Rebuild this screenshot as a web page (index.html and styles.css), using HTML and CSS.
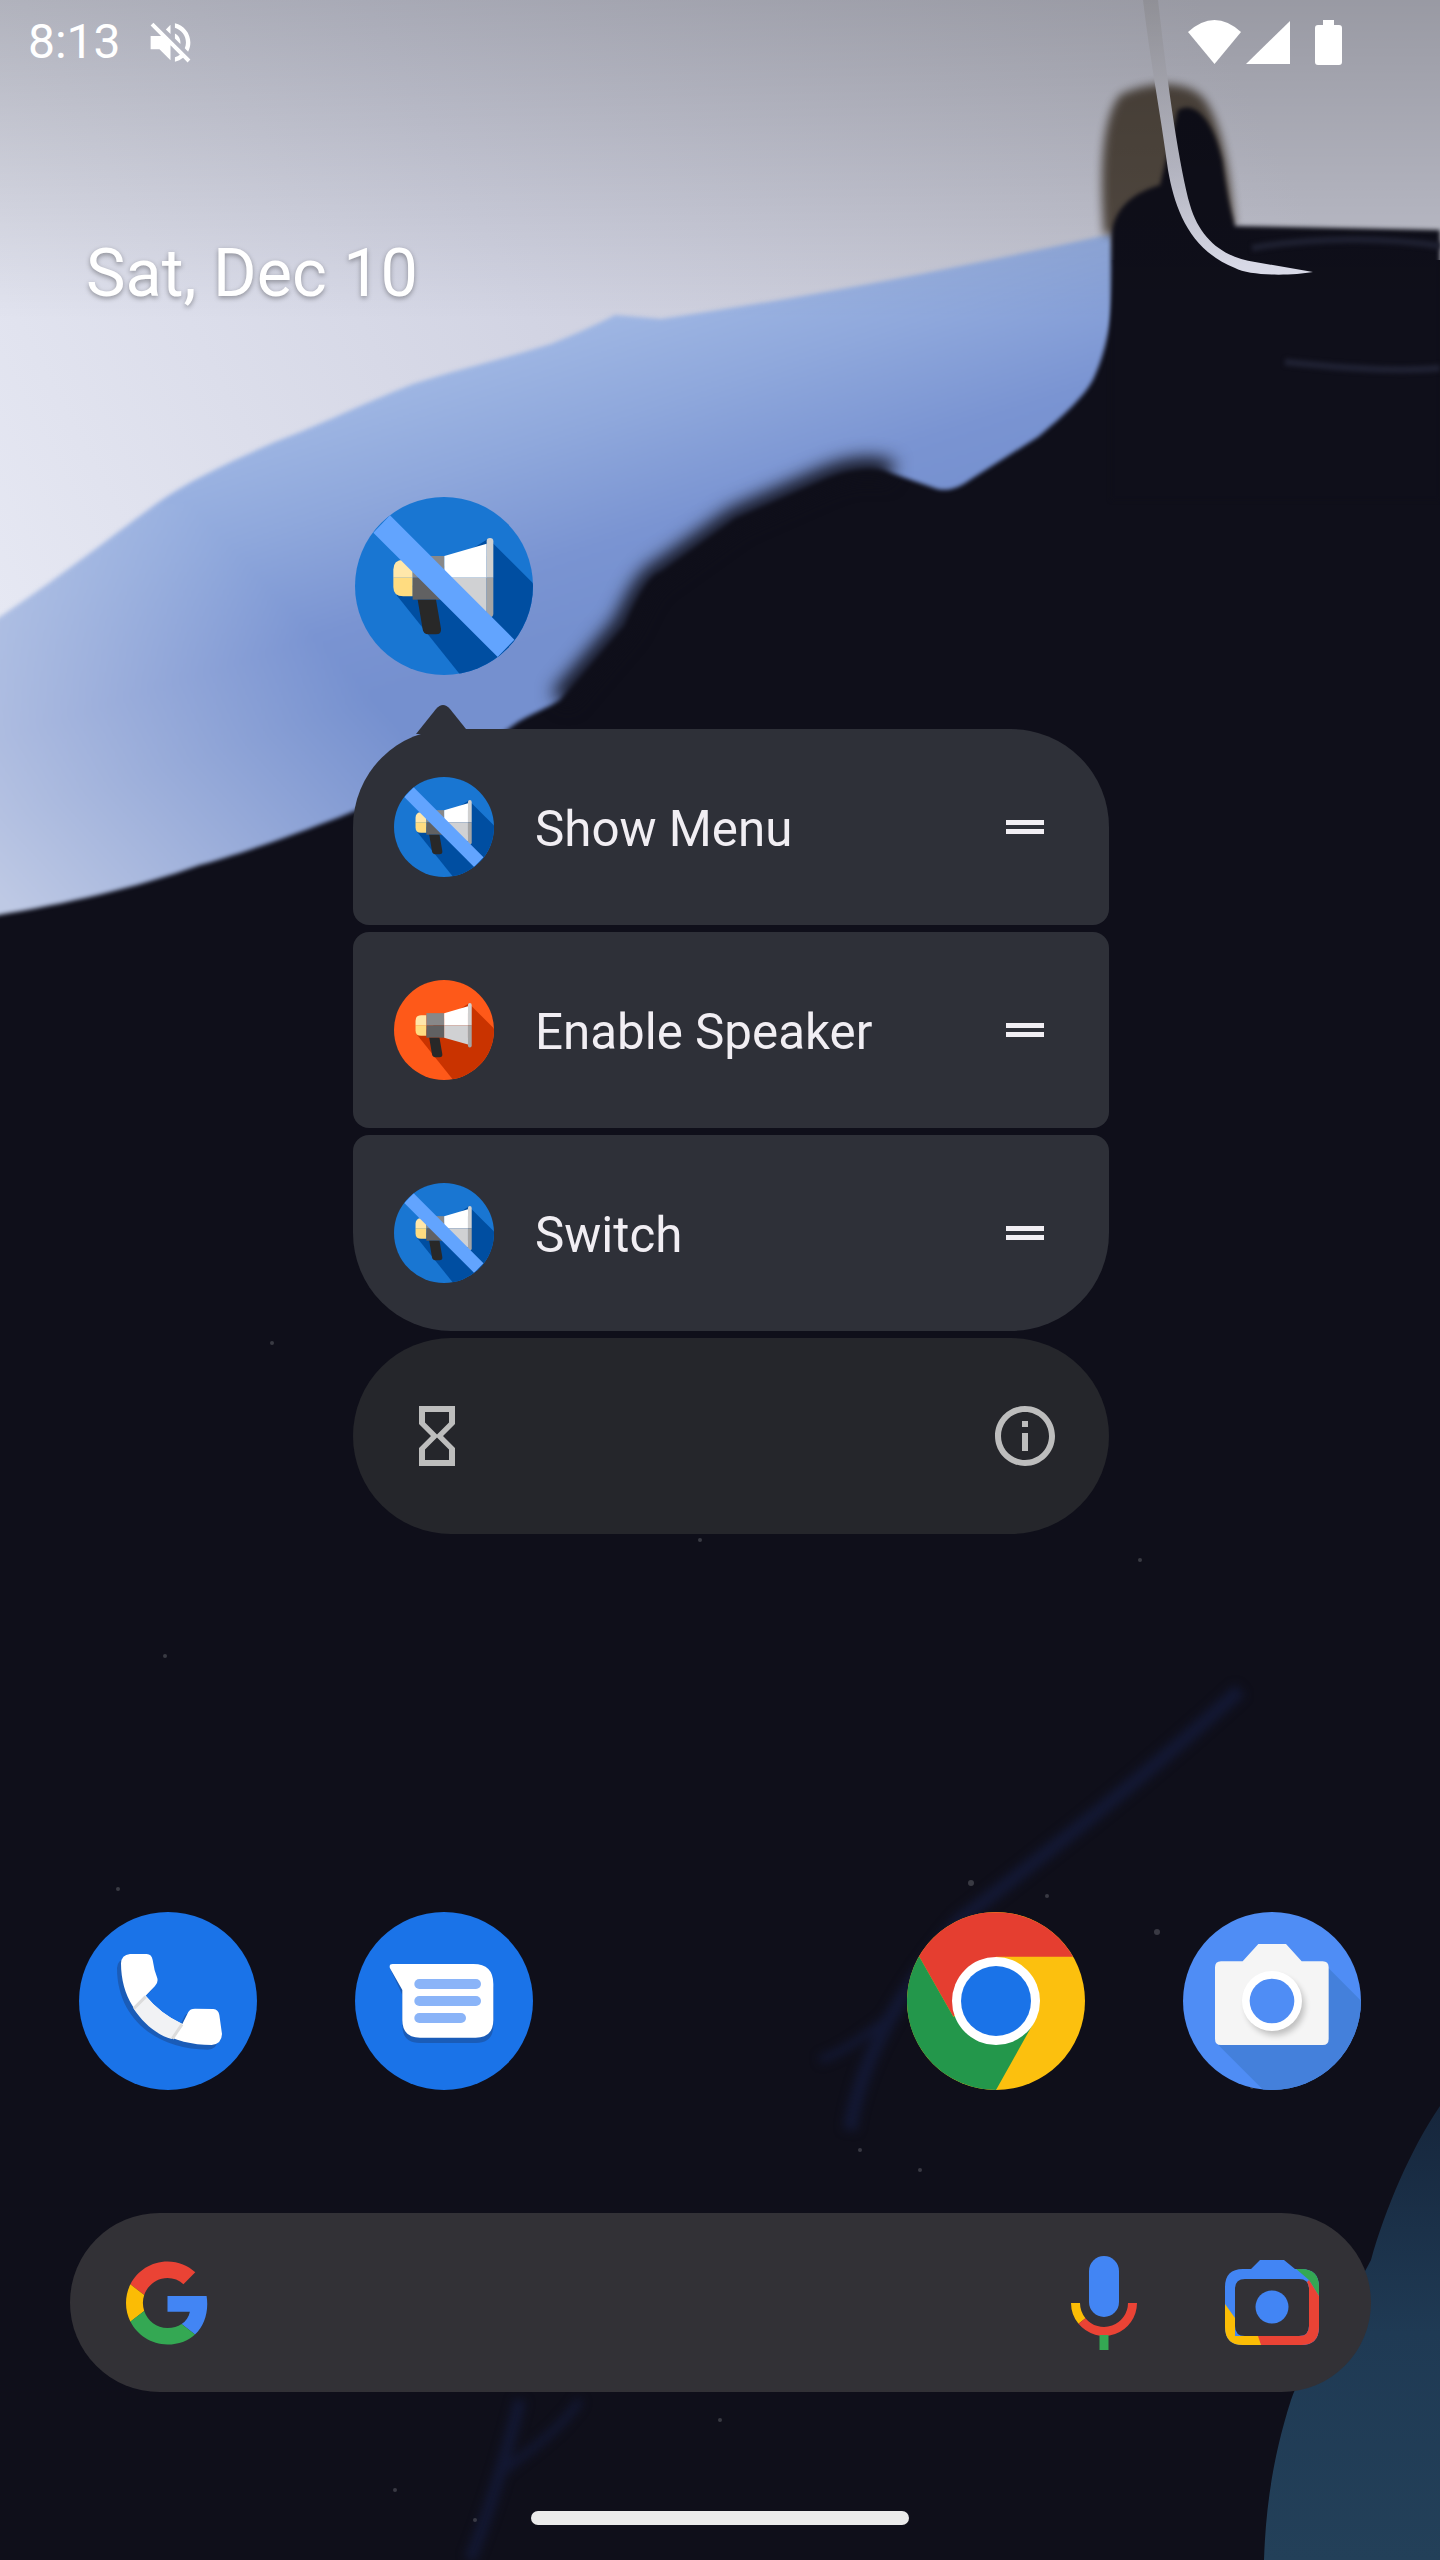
FILE: index.html
```html
<!DOCTYPE html>
<html lang="en">
<head>
    <meta charset="UTF-8">
    <title>Home screen</title>
    <link rel="stylesheet" href="styles.css">
</head>
<body>
<div class="screen">
    <svg class="wallpaper" viewBox="0 0 1440 2560" aria-hidden="true">
        <defs>
            <linearGradient id="wallLight" gradientUnits="userSpaceOnUse" x1="1200" y1="0" x2="0" y2="620">
                <stop offset="0" stop-color="#bfc0cc"/>
                <stop offset="0.55" stop-color="#d2d4e3"/>
                <stop offset="1" stop-color="#e6e8f3"/>
            </linearGradient>
            <linearGradient id="wallBlue" gradientUnits="userSpaceOnUse" x1="500" y1="250" x2="620" y2="620">
                <stop offset="0" stop-color="#aec4ea"/>
                <stop offset="0.5" stop-color="#8fa8dc"/>
                <stop offset="0.8" stop-color="#7a94d2"/>
                <stop offset="1" stop-color="#7590cf"/>
            </linearGradient>
            <linearGradient id="wallFade" gradientUnits="userSpaceOnUse" x1="0" y1="900" x2="300" y2="620">
                <stop offset="0" stop-color="#e6e8f0" stop-opacity="0.65"/>
                <stop offset="1" stop-color="#e6e8f0" stop-opacity="0"/>
            </linearGradient>
            <linearGradient id="wallScrim" x1="0" y1="0" x2="0" y2="1">
                <stop offset="0" stop-color="#000" stop-opacity="0.2"/>
                <stop offset="1" stop-color="#000" stop-opacity="0"/>
            </linearGradient>
            <linearGradient id="wallTeal" x1="0" y1="0" x2="0" y2="1">
                <stop offset="0" stop-color="#16263c"/>
                <stop offset="0.5" stop-color="#1f3a54"/>
                <stop offset="1" stop-color="#234059"/>
            </linearGradient>
            <linearGradient id="wallStreak" gradientUnits="userSpaceOnUse" x1="1150" y1="0" x2="1220" y2="270">
                <stop offset="0" stop-color="#b4b4bc"/>
                <stop offset="0.6" stop-color="#c4c5d2"/>
                <stop offset="1" stop-color="#dfe0ee"/>
            </linearGradient>
            <filter id="soft2" color-interpolation-filters="sRGB"><feGaussianBlur stdDeviation="2"/></filter>
            <filter id="soft5" color-interpolation-filters="sRGB" x="-30%" y="-30%" width="160%" height="160%"><feGaussianBlur stdDeviation="5"/></filter>
            <filter id="soft9" color-interpolation-filters="sRGB" x="-30%" y="-30%" width="160%" height="160%"><feGaussianBlur stdDeviation="9"/></filter>
        </defs>
        <rect width="1440" height="2560" fill="#0f0f1a"/>
        <path d="M0,0H1440V260L1111,260L0,640Z" fill="url(#wallLight)"/>
        <g filter="url(#soft2)">
            <path fill="url(#wallBlue)" d="M1111,234 C950,270 790,300 661,319 L615,315 C590,328 570,336 551,344 C500,360 455,370 413,384 C360,405 320,425 275,442 C230,462 190,480 156,504 C100,545 50,585 -20,630 L-20,918 C60,905 130,890 200,865 C260,848 300,832 340,817 C380,800 410,790 430,778 C470,755 500,735 518,722 C535,712 548,708 560,700 L624,625 C640,590 650,575 661,571 L735,518 L826,478 C850,468 875,465 891,473 L937,489 C950,492 960,487 973,478 L1038,437 C1065,415 1085,395 1093,380 C1110,345 1114,300 1116,268 Z"/>
            <path fill="url(#wallFade)" d="M156,504 C100,545 50,585 -20,630 L-20,918 C60,905 130,890 200,865 C260,848 300,832 340,817 L400,790 L400,504Z"/>
        </g>
        <path filter="url(#soft9)" fill="none" stroke="#0f0f1a" stroke-width="22" d="M560,700 L624,625 C640,590 650,575 661,571 L735,518 L826,478 C850,468 875,465 891,473"/>
        <path filter="url(#soft5)" fill="#3f3428" opacity="0.85" d="M1104,235 C1100,180 1100,120 1120,95 C1150,80 1190,80 1205,100 C1225,130 1230,180 1235,226Z"/>
        <path filter="url(#soft2)" fill="#0f0f1a" d="M1111,240 C1112,215 1125,195 1160,185 L1178,110 C1195,100 1213,120 1222,160 C1226,190 1230,210 1235,226 L1440,230 V500 H1111Z"/>
        <path fill="url(#wallStreak)" d="M1143,0 L1158,0 C1168,90 1180,170 1190,205 C1200,240 1225,258 1255,262 L1313,272 C1290,276 1250,276 1235,268 C1190,250 1175,210 1168,170 C1160,110 1150,60 1143,0Z"/>
        <path d="M1252,248 C1320,236 1390,238 1440,246 M1285,362 C1340,368 1400,372 1440,368" fill="none" stroke="#1f2132" stroke-width="7" filter="url(#soft2)"/>
        <rect width="1440" height="320" fill="url(#wallScrim)"/>
        <path d="M1440,2106 C1410,2150 1385,2210 1371,2260 C1340,2320 1305,2360 1291,2400 C1275,2450 1266,2500 1264,2560 H1440Z" fill="url(#wallTeal)"/>
        <g fill="none" stroke="#131833" filter="url(#soft5)">
            <path stroke-width="14" d="M1240,1690 C1130,1790 1050,1850 960,1920 C900,1990 860,2060 850,2130"/>
            <path stroke-width="12" d="M520,2400 C505,2460 490,2510 470,2560"/>
            <path stroke-width="8" d="M580,2400 C560,2430 530,2450 505,2470"/>
            <path stroke-width="8" d="M900,2010 C870,2030 850,2050 820,2060"/>
        </g>
        <g fill="#55565f" opacity="0.6">
            <circle cx="118" cy="1889" r="2"/><circle cx="165" cy="1656" r="2"/><circle cx="272" cy="1343" r="2"/>
            <circle cx="971" cy="1883" r="3"/><circle cx="1157" cy="1932" r="3"/><circle cx="1047" cy="1896" r="2"/>
            <circle cx="700" cy="1540" r="2"/><circle cx="1252" cy="2087" r="2"/><circle cx="1335" cy="1990" r="2"/>
            <circle cx="920" cy="2170" r="2"/><circle cx="395" cy="2490" r="2"/><circle cx="860" cy="2150" r="2"/>
            <circle cx="475" cy="2520" r="2"/><circle cx="720" cy="2420" r="2"/><circle cx="1140" cy="1560" r="2"/>
        </g>
    </svg>

    <svg class="defs" aria-hidden="true">
        <defs>
            <clipPath id="megaClip"><circle cx="312" cy="317" r="267"/></clipPath>
            <g id="mega">
                <circle class="mega-disc" cx="312" cy="317" r="267"/>
                <polygon class="mega-shade" clip-path="url(#megaClip)" points="445,175 640,370 640,620 390,620 170,345"/>
                <path d="M218,238H190Q160,238 160,268V292H218Z" fill="#ffe7aa"/>
                <path d="M218,292H160V320Q160,348 190,348H218Z" fill="#ffdc80"/>
                <rect x="218" y="227" width="95" height="65" fill="#888889"/>
                <rect x="218" y="292" width="95" height="66" fill="#616162"/>
                <polygon points="313,227 440,190 440,292 313,292" fill="#fff"/>
                <polygon points="313,292 440,292 440,395 313,358" fill="#d0d1d3"/>
                <path d="M440,292V183Q440,173 450,173T460,183V292Z" fill="#d0d0d0"/>
                <path d="M440,292H460V400Q460,410 450,410T440,400Z" fill="#a5a5a5"/>
                <path d="M233,358H288L303,445Q305,462 288,462H265Q250,462 248,447Z" fill="#282828"/>
            </g>
            <polygon id="megaSlash" clip-path="url(#megaClip)" fill="#62a4fe" points="150,105 100,157 473,530 523,478"/>
        </defs>
    </svg>

    <header class="status">
        <span class="status-time">8:13</span>
        <svg class="status-mute" viewBox="0 0 24 24" fill="#fff"><path d="M16.5 12c0-1.77-1.02-3.29-2.5-4.03v2.21l2.45 2.45c.03-.2.05-.41.05-.63zm2.5 0c0 .94-.2 1.82-.54 2.64l1.51 1.51C20.63 14.91 21 13.5 21 12c0-4.28-2.99-7.86-7-8.77v2.06c2.89.86 5 3.54 5 6.71zM4.27 3L3 4.27 7.73 9H3v6h4l5 5v-6.73l4.25 4.25c-.67.52-1.42.93-2.25 1.18v2.06c1.38-.31 2.63-.95 3.69-1.81L19.73 21 21 19.73l-9-9L4.27 3zM12 4L9.91 6.09 12 8.18V4z"/></svg>
        <div class="status-right">
            <svg class="status-wifi" viewBox="0 0 53 44" fill="#fff"><path d="M0,12 Q26.5,-12 53,12 L26.5,44Z"/></svg>
            <svg class="status-signal" viewBox="0 0 44 43" fill="#fff"><path d="M0,43 L44,0 V43Z"/></svg>
            <svg class="status-battery" viewBox="0 0 27 45" fill="#fff"><path d="M8,0H19V5H24Q27,5 27,8V42Q27,45 24,45H3Q0,45 0,42V8Q0,5 3,5H8Z"/></svg>
        </div>
    </header>

    <div class="date">Sat, Dec 10</div>

    <svg class="app-shortcut mega-blue" viewBox="45 50 534 534"><use href="#mega"/><use href="#megaSlash"/></svg>

    <section class="popup">
        <svg class="popup-arrow" viewBox="0 0 54 30"><path d="M0,30 L20,5 Q27,-3 34,5 L54,30Z"/></svg>
        <div class="popup-item popup-first">
            <svg class="popup-icon mega-blue" viewBox="45 50 534 534"><use href="#mega"/><use href="#megaSlash"/></svg>
            <span class="popup-label">Show Menu</span>
            <span class="popup-handle"></span>
        </div>
        <div class="popup-item">
            <svg class="popup-icon mega-orange" viewBox="45 50 534 534"><use href="#mega"/></svg>
            <span class="popup-label">Enable Speaker</span>
            <span class="popup-handle"></span>
        </div>
        <div class="popup-item popup-last">
            <svg class="popup-icon mega-blue" viewBox="45 50 534 534"><use href="#mega"/><use href="#megaSlash"/></svg>
            <span class="popup-label">Switch</span>
            <span class="popup-handle"></span>
        </div>
        <div class="popup-footer">
            <svg class="footer-icon" viewBox="0 0 24 24"><path d="M6 2v6h.01L6 8.01 10 12l-4 4 .01.01H6V22h12v-5.99h-.01L18 16l-4-4 4-3.99-.01-.01H18V2H6zm10 14.5V20H8v-3.5l4-4 4 4zm-4-5l-4-4V4h8v3.5l-4 4z"/></svg>
            <svg class="footer-icon" viewBox="0 0 24 24"><path d="M11 7h2v2h-2zm0 4h2v6h-2zm1-9C6.48 2 2 6.48 2 12s4.48 10 10 10 10-4.48 10-10S17.52 2 12 2zm0 18c-4.41 0-8-3.59-8-8s3.59-8 8-8 8 3.59 8 8-3.59 8-8 8z"/></svg>
        </div>
    </section>

    <nav class="dock">
        <svg class="dock-icon" viewBox="87 96 534 534">
            <circle cx="354" cy="363" r="267" fill="#1a73e8"/>
            <path fill="#1a5cb8" transform="translate(-12 14)" d="M240,222 L290,222 Q305,222 308,240 Q312,270 322,295 Q325,308 315,318 L287,347 Q330,400 397,432 L415,396 Q420,386 435,386 L490,387 Q505,388 508,405 L516,462 Q515,492 485,495 C330,495 213,400 213,250 Q214,225 240,222Z"/>
            <path fill="#fff" d="M240,222 L290,222 Q305,222 308,240 Q312,270 322,295 Q325,308 315,318 L287,347 Q330,400 397,432 L415,396 Q420,386 435,386 L490,387 Q505,388 508,405 L516,462 Q515,492 485,495 C330,495 213,400 213,250 Q214,225 240,222Z"/>
            <path fill="#f1f2f4" d="M287,347 Q330,400 397,432 L365,477 C320,465 280,430 250,385Z"/>
            <path stroke="#dcdcdc" stroke-width="9" d="M287,350 L252,385 M396,433 L367,476"/>
        </svg>
        <svg class="dock-icon" viewBox="915 96 534 534">
            <circle cx="1182" cy="363" r="267" fill="#1a73e8"/>
            <path fill="#1a5cb8" d="M1020,265 L1057,345 V436 Q1057,489 1110,489 H1277 Q1330,489 1330,436 V320 L1100,265Z"/>
            <path fill="#fff" d="M1028,252 H1270 Q1330,252 1330,312 V420 Q1330,473 1277,473 H1110 Q1057,473 1057,420 V330 L1020,265 Q1016,252 1028,252Z"/>
            <g fill="#8ab4f8">
                <rect x="1093" y="297" width="200" height="30" rx="15"/>
                <rect x="1093" y="348" width="200" height="30" rx="15"/>
                <rect x="1093" y="399" width="155" height="30" rx="15"/>
            </g>
        </svg>
        <svg class="dock-icon dock-chrome" viewBox="51 96 534 534">
            <circle cx="318" cy="363" r="267" fill="#fcc00e"/>
            <path fill="#e53e30" d="M549,230 A267,267 0 0 0 87,229 L190,410 L318,230Z"/>
            <path fill="#23974b" d="M87,229 A267,267 0 0 0 318,630 L430,430 L318,362 L190,410Z"/>
            <circle cx="318" cy="363" r="132" fill="#fff"/>
            <circle cx="318" cy="363" r="105" fill="#1a73e8"/>
        </svg>
        <svg class="dock-icon" viewBox="879 96 534 534">
            <defs>
                <clipPath id="cameraClip"><circle cx="1146" cy="363" r="267"/></clipPath>
                <filter id="lensShadow" color-interpolation-filters="sRGB"><feGaussianBlur stdDeviation="9"/></filter>
            </defs>
            <circle cx="1146" cy="363" r="267" fill="#4f8df5"/>
            <polygon clip-path="url(#cameraClip)" fill="#4480db" points="1316,265 1440,389 1440,660 1150,660 985,495"/>
            <path fill="#f5f5f5" d="M993,244 H1058 L1105,192 H1188 L1235,244 H1298 Q1316,244 1316,262 V477 Q1316,495 1298,495 H993 Q975,495 975,477 V262 Q975,244 993,244Z"/>
            <circle cx="1156" cy="378" r="88" fill="#000" opacity="0.22" filter="url(#lensShadow)"/>
            <circle cx="1146" cy="363" r="90" fill="#fff"/>
            <circle cx="1146" cy="363" r="67" fill="#4f8df5"/>
        </svg>
    </nav>

    <div class="search">
        <svg class="search-g" viewBox="0 0 48 48">
            <path fill="#ea4335" d="M24 9.5c3.54 0 6.71 1.22 9.21 3.6l6.85-6.85C35.9 2.38 30.47 0 24 0 14.62 0 6.51 5.38 2.56 13.22l7.98 6.19C12.43 13.72 17.74 9.5 24 9.5z"/>
            <path fill="#4285f4" d="M46.98 24.55c0-1.57-.15-3.09-.38-4.55H24v9.02h12.94c-.58 2.96-2.26 5.48-4.78 7.18l7.73 6c4.51-4.18 7.09-10.36 7.09-17.65z"/>
            <path fill="#fbbc05" d="M10.53 28.59c-.48-1.45-.76-2.99-.76-4.59s.27-3.14.76-4.59l-7.98-6.19C.92 16.46 0 20.12 0 24c0 3.88.92 7.54 2.56 10.78l7.97-6.19z"/>
            <path fill="#34a853" d="M24 48c6.48 0 11.93-2.13 15.89-5.81l-7.73-6c-2.15 1.45-4.92 2.3-8.16 2.3-6.26 0-11.57-4.22-13.47-9.91l-7.98 6.19C6.51 42.62 14.62 48 24 48z"/>
        </svg>
        <svg class="search-mic" viewBox="0 0 66 94">
            <rect x="18" y="0" width="30" height="61" rx="15" fill="#4285f4"/>
            <path d="M4.5,47 A28.5,28.5 0 0 0 11,65" fill="none" stroke="#fbbc05" stroke-width="9"/>
            <path d="M11,65 A28.5,28.5 0 0 0 61.5,47" fill="none" stroke="#ea4335" stroke-width="9"/>
            <rect x="28.5" y="79" width="9" height="15" fill="#34a853"/>
        </svg>
        <svg class="search-lens" viewBox="0 0 94 85">
            <defs>
                <clipPath id="lensFrame">
                    <path clip-rule="evenodd" d="M26,9 L35,0 H59 L70,9 H76 Q94,9 94,27 V67 Q94,85 76,85 H18 Q0,85 0,67 V27 Q0,9 18,9Z M20,19 Q10,19 10,29 V66 Q10,76 20,76 H74 Q84,76 84,66 V29 Q84,19 74,19Z"/>
                </clipPath>
            </defs>
            <g clip-path="url(#lensFrame)">
                <rect width="94" height="85" fill="#4285f4"/>
                <polygon fill="#34a853" points="70,8 94,8 94,36 84,20"/>
                <polygon fill="#ea4335" points="84,20 94,36 94,85 36,85 32,76"/>
                <polygon fill="#fbbc05" points="0,44 10,58 10,76 33,76 36,85 0,85"/>
            </g>
            <circle cx="47" cy="47" r="16.5" fill="#4285f4"/>
        </svg>
    </div>

    <div class="home-pill"></div>
</div>
</body>
</html>
```

FILE: styles.css
```css
body {
    margin: 0;
    background: #0f0f1a;
    font-family: Roboto, "Noto Sans", sans-serif;
    color: #fff;
}

.screen {
    position: relative;
    width: 1440px;
    height: 2560px;
    overflow: hidden;
}

.wallpaper {
    position: absolute;
    top: 0;
    left: 0;
    width: 1440px;
    height: 2560px;
}

.defs {
    position: absolute;
    width: 0;
    height: 0;
}

.status {
    position: relative;
    display: flex;
    align-items: center;
    height: 84px;
    padding: 0 98px 0 28px;
}

.status-time {
    font-size: 48px;
    line-height: 56px;
}

.status-mute {
    width: 53px;
    height: 53px;
    margin-left: 23px;
}

.status-right {
    display: flex;
    align-items: center;
    margin-left: auto;
}

.status-wifi {
    width: 53px;
    height: 44px;
}

.status-signal {
    width: 44px;
    height: 43px;
    margin-left: 5px;
}

.status-battery {
    width: 27px;
    height: 45px;
    margin-left: 25px;
}

.date {
    position: relative;
    margin: 151px 0 0 86px;
    font-size: 66.5px;
    line-height: 76px;
    color: #fff;
    text-shadow: 0 2px 5px rgba(0, 0, 0, 0.35);
}

.mega-blue {
    --disc: #1976d2;
    --shade: #004ea1;
}

.mega-orange {
    --disc: #fe5919;
    --shade: #c93300;
}

.mega-disc {
    fill: var(--disc);
}

.mega-shade {
    fill: var(--shade);
}

.app-shortcut {
    position: relative;
    display: block;
    width: 178px;
    height: 178px;
    margin: 186px 0 0 355px;
}

.popup {
    position: relative;
    display: flex;
    flex-direction: column;
    gap: 7px;
    width: 756px;
    margin: 54px 0 0 353px;
}

.popup-arrow {
    position: absolute;
    top: -25px;
    left: 63px;
    width: 54px;
    height: 30px;
    fill: #2e3038;
}

.popup-item {
    display: flex;
    align-items: center;
    height: 196px;
    padding: 0 65px 0 41px;
    box-sizing: border-box;
    background-color: #2e3038;
    border-radius: 16px;
}

.popup-first {
    border-radius: 98px 98px 16px 16px;
}

.popup-last {
    border-radius: 16px 16px 98px 98px;
}

.popup-icon {
    width: 100px;
    height: 100px;
    flex: none;
}

.popup-label {
    margin-left: 41px;
    padding-top: 3px;
    font-size: 49.3px;
    color: #f1eef3;
}

.popup-handle {
    width: 38px;
    height: 14px;
    margin-left: auto;
    box-sizing: border-box;
    border-top: 5px solid #f1eef3;
    border-bottom: 5px solid #f1eef3;
}

.popup-footer {
    display: flex;
    align-items: center;
    justify-content: space-between;
    height: 196px;
    padding: 0 48px;
    box-sizing: border-box;
    background-color: #25262b;
    border-radius: 98px;
}

.footer-icon {
    width: 72px;
    height: 72px;
    fill: #bdbdbd;
}

.dock {
    position: relative;
    display: grid;
    grid-template-columns: repeat(5, 276px);
    justify-items: center;
    margin: 378px 0 0 30px;
}

.dock-icon {
    width: 178px;
    height: 178px;
}

.dock-chrome {
    grid-column-start: 4;
}

.search {
    position: relative;
    display: flex;
    align-items: center;
    height: 179px;
    margin: 123px 69px 0 70px;
    padding: 0 52px 0 56px;
    background-color: #323136;
    border-radius: 90px;
}

.search-g {
    width: 83px;
    height: 84px;
}

.search-mic {
    width: 66px;
    height: 94px;
    margin-left: auto;
}

.search-lens {
    width: 94px;
    height: 85px;
    margin-left: 88px;
}

.home-pill {
    position: relative;
    width: 378px;
    height: 14px;
    margin: 119px 0 0 531px;
    background-color: #ebebeb;
    border-radius: 7px;
}
```
